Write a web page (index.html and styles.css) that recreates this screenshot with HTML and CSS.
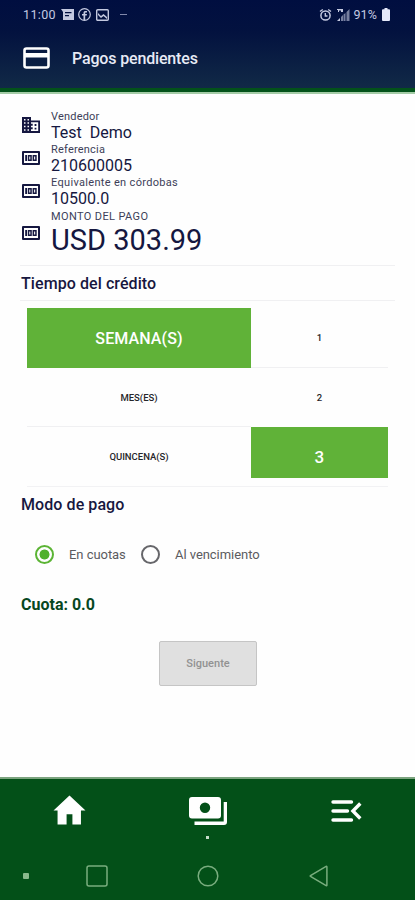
FILE: index.html
```html
<!DOCTYPE html>
<html lang="es">
<head>
<meta charset="utf-8">
<meta name="viewport" content="width=device-width">
<title>Pagos pendientes</title>
<link rel="stylesheet" href="styles.css">
</head>
<body>
<svg width="0" height="0" class="defs" aria-hidden="true">
  <symbol id="money" viewBox="0 0 18 14">
    <path fill-rule="evenodd" d="M1 0h16a1 1 0 011 1v12a1 1 0 01-1 1H1a1 1 0 01-1-1V1a1 1 0 011-1zM2 2v10h14V2z"/>
    <path d="M3.200 4h1.800v6H3.200zM5.800 4h4v6h-4zm1.500 1.500v3h1v-3zM10.600 4h4.100v6h-4.100zm1.500 1.500v3h1.100v-3z" fill-rule="evenodd"/>
  </symbol>
</svg>
<header class="top">
  <div class="status">
    <time>11:00</time>
    <svg class="s-msg" width="13" height="12" viewBox="0 0 13 12"><path fill-rule="evenodd" d="M0 0h13v11H2V3zM4 3v1.300h6.500V3zm0 3v1.200h4V6z"/></svg>
    <svg class="s-fb" width="13" height="13" viewBox="0 0 13 13"><circle cx="6.500" cy="6.500" r="5.800" fill="none" stroke="currentColor" stroke-width="1.200"/><path d="M5.500 12V7.500H4V5.900h1.500V4.800C5.500 3.300 6.400 2.700 9 3v1.400H8c-.7 0-.8.3-.8.800v.7H9l-.3 1.600H7.200V12z"/></svg>
    <svg class="s-pic" width="13" height="12" viewBox="0 0 13 12"><rect x=".7" y=".7" width="11.600" height="10.600" rx="1" fill="none" stroke="currentColor" stroke-width="1.400"/><path d="M2 4l3 3 2.500-2L11 8v2L7.500 7 5 9 2 6z"/></svg>
    <span class="dash"></span>
    <span class="grow"></span>
    <svg class="outline s-alarm" width="13" height="14" viewBox="0 0 13 14" stroke="currentColor" stroke-width="1.500"><circle cx="6.500" cy="7.500" r="4.600"/><path d="M6.300 5v3h2.200M1 3.500l2.800-2M12 3.500l-2.800-2" stroke-width="1.400"/></svg>
    <svg class="s-signal" width="13" height="14" viewBox="0 0 13 14"><path d="M0 13l3-3v3z"/><path d="M4 9l2-2v6H4zM6.500 6.500L8.500 5v8h-2zM9.500 4L12.500 1v12h-3z" opacity=".6"/><path d="M0 1h6v3H4V2.500H2V4H1V2H0z"/></svg>
    <span class="pct">91%</span>
    <svg class="s-bat" width="8" height="13" viewBox="0 0 8 13"><path d="M2.500 0h3v1.200H7a1 1 0 011 1V12a1 1 0 01-1 1H1a1 1 0 01-1-1V2.200a1 1 0 011-1h1.500z"/></svg>
  </div>
  <div class="bar">
    <svg width="27" height="22" viewBox="0 0 27 22"><rect x="1.500" y="1.500" width="24" height="19" rx="2" fill="none" stroke="currentColor" stroke-width="2.600"/><path d="M2 6h24v4.500H2z"/></svg>
    <h1>Pagos pendientes</h1>
  </div>
</header>
<main>
  <section class="info">
    <div class="item"><svg width="18" height="16" viewBox="0 0 18 16"><path fill-rule="evenodd" d="M0 0h9v3.500h9V16H0zM2 2v1.500h1.500V2zm3.500 0v1.500H7V2zM2 5.300v1.500h1.500V5.300zm3.500 0v1.500H7V5.300zM2 8.800v1.500h1.500V8.800zm3.500 0v1.500H7V8.800zM2 12.300v1.500h1.500v-1.500zm3.500 0v1.500H7v-1.500zM9 5.300v1.500h1.700v2H9v1.500h1.700v2H9v1.700h7.200V5.300z"/><path d="M12.600 7h1.800v1.900h-1.800zm0 3.700h1.800v1.900h-1.800z"/></svg>
      <div><small>Vendedor</small><b>Test&nbsp; Demo</b></div></div>
    <div class="item"><svg width="18" height="14"><use href="#money"/></svg>
      <div><small>Referencia</small><b>210600005</b></div></div>
    <div class="item"><svg width="18" height="14"><use href="#money"/></svg>
      <div><small class="l3">Equivalente en córdobas</small><b>10500.0</b></div></div>
    <div class="item total"><svg width="18" height="14"><use href="#money"/></svg>
      <div><small class="l4">MONTO DEL PAGO</small><b class="v4">USD 303.99</b></div></div>
  </section>
  <h2 class="term">Tiempo del crédito</h2>
  <div class="grid">
    <div class="cell on">SEMANA(S)</div><div class="cell line">1</div>
    <div class="cell line">MES(ES)</div><div class="cell">2</div>
    <div class="cell">QUINCENA(S)</div><div class="cell on short">3</div>
  </div>
  <h2 class="mode">Modo de pago</h2>
  <div class="radios">
    <span class="radio checked"></span><span class="r1">En cuotas</span>
    <span class="radio"></span><span class="r2">Al vencimiento</span>
  </div>
  <p class="fee">Cuota: 0.0</p>
  <button class="next" disabled>Siguente</button>
</main>
<footer>
  <nav class="tabs">
    <div><svg width="33" height="30" viewBox="0 0 34 30"><path d="M17 0l16.500 15.500h-4.700V30H20V19.500h-6V30H4.700V15.500H.5z"/></svg></div>
    <div><svg width="38" height="28" viewBox="0 0 38 28"><path fill-rule="evenodd" d="M3 0h26a3 3 0 013 3v15.500a3 3 0 01-3 3H3a3 3 0 01-3-3V3a3 3 0 013-3zm13 5.500a5.200 5.200 0 100 10.400 5.200 5.200 0 000-10.400z"/><path d="M34.700 5H38v20a3 3 0 01-3 3H5.500v-3.500h29.200z"/></svg><i></i></div>
    <div><svg class="outline" width="31" height="22" viewBox="0 0 31 22" stroke="currentColor" stroke-width="3.400"><path d="M2 2h18.500M2 11h14.500M2 20h18.500" stroke-linecap="round"/><path d="M29.300 3.500L21.900 11l7.400 7.500"/></svg></div>
  </nav>
  <div class="system">
    <i class="dot"></i>
    <svg class="recent" width="22" height="22" viewBox="0 0 22 22"><rect x="1" y="1" width="20" height="20" rx="2"/></svg>
    <svg class="home" width="22" height="22" viewBox="0 0 22 22"><circle cx="11" cy="11" r="9.800"/></svg>
    <svg class="back" width="19" height="22" viewBox="0 0 19 22"><path d="M17.900 1.800v18.400q0 .8-.8.400L1.500 11.500q-.6-.5 0-1L17.100 1.400q.8-.4.800.4z"/></svg>
  </div>
</footer>
</body>
</html>
```

FILE: styles.css
```css
* { box-sizing: border-box; }
body { margin: 0; width: 415px; height: 900px; overflow: hidden; background: #fefefe; font-family: Roboto, "Liberation Sans", sans-serif; color: #17173f; display: flex; flex-direction: column; }
svg { fill: currentColor; flex: none; display: block; }
.outline { fill: none; }
.defs { position: absolute; }
h1, h2, p { margin: 0; font-weight: 500; white-space: nowrap; }
.top { height: 94px; background: linear-gradient(#000e40 0, #03123f 35%, #122b47 100%); border-bottom: 2px solid #a5cca7; box-shadow: inset 0 -4px #03521a; color: #e7eaf5; }
.status { height: 29px; padding: 0 25px 0 23px; display: flex; align-items: center; font-size: 12.5px; letter-spacing: .35px; color: #c4c9e0; }
.s-msg { margin-left: 5px; }
.s-fb { margin-left: 4px; }
.s-pic { margin-left: 5px; }
.dash { width: 7px; height: 1px; background: #8289aa; margin-left: 11px; }
.grow { flex: 1; }
.s-signal { margin-left: 5px; }
.pct { margin-left: 3px; letter-spacing: .1px; }
.s-bat { margin-left: 5px; color: #e5e9fa; }
.bar { height: 58px; padding-left: 23px; display: flex; align-items: center; gap: 22px; color: #fff; }
h1 { font-size: 16px; letter-spacing: -.16px; color: #e7eaf5; }
main { height: 683px; display: flex; flex-direction: column; }
.info { height: 171px; padding: 16px 0 0 22px; color: #151740; }
.item { display: flex; gap: 11px; height: 33.200px; }
.item > svg { margin-top: 8px; }
.item:first-child > svg { margin-top: 7px; }
.total > svg { margin-top: 16px; }
.item div { display: flex; flex-direction: column; align-items: flex-start; white-space: nowrap; }
small { font-size: 11px; line-height: 13px; letter-spacing: .2px; color: #3d3e59; }
.l3 { letter-spacing: .32px; }
.l4 { letter-spacing: .38px; }
.item b { font-weight: 400; font-size: 16px; line-height: 20px; }
.item .v4 { font-size: 29px; line-height: 35px; }
.term { height: 36px; margin: 0 20px; padding-left: 1px; border: solid #f0f0f2; border-width: 1px 0; line-height: 35px; font-size: 16px; letter-spacing: .08px; }
.grid { margin: 7px 27px 0; display: grid; grid-template-columns: 224px 137px; grid-template-rows: 60px 59px 59px; border-bottom: 1px solid #f2f2f4; }
.cell { display: flex; align-items: center; justify-content: center; font-size: 9.500px; font-weight: 500; color: #26262a; }
.line { border-bottom: 1px solid #f0f0f2; }
.on { background: #60b238; color: #fff; font-size: 16px; letter-spacing: .1px; }
.short { height: 51px; padding-top: 8px; font-size: 17px; }
.mode { margin: 6px 0 0 21px; line-height: 24px; font-size: 16px; letter-spacing: .08px; }
.radios { display: flex; align-items: center; height: 24px; margin: 25px 0 0 35px; font-size: 13px; color: #5b5b5f; }
.radio { width: 19px; height: 19px; border: 2px solid #66666a; border-radius: 50%; }
.checked { border-color: #5bb434; background: radial-gradient(circle, #4fb02c 0 4.700px, #fefefe 5.300px); }
.r1 { width: 57px; margin: 0 15px; white-space: nowrap; letter-spacing: -.05px; }
.r2 { margin-left: 15px; letter-spacing: -.05px; }
.fee { margin: 27px 0 0 21px; line-height: 24px; font-size: 16px; font-weight: 700; color: #07471f; }
.next { width: 98px; height: 45px; margin: 24px 0 0 159px; background: #e0e0e0; border: 1.500px solid #c5c5c5; border-radius: 2px; padding: 0; font: 500 11px Roboto, sans-serif; color: #929292; }
footer { height: 123px; background: #035018; border-top: 2px solid #7ba37e; color: #fff; }
.tabs { height: 73px; display: grid; grid-template-columns: 138px 139px 138px; }
.tabs div { display: flex; flex-direction: column; align-items: center; padding-top: 16px; }
.tabs div:nth-child(2) { padding-top: 18px; }
.tabs div:nth-child(3) { padding-top: 21px; }
.tabs i { width: 3px; height: 3px; background: #c6dcc9; margin-top: 11px; }
.system { height: 48px; display: flex; align-items: center; padding-left: 23px; color: #79ad7e; }
.system svg { fill: none; stroke: currentColor; stroke-width: 1.500; }
.dot { width: 6px; height: 6px; background: #8ab98c; border-radius: 1px; }
.recent { margin-left: 57px; }
.home { margin-left: 89px; }
.back { margin-left: 90px; }
```
